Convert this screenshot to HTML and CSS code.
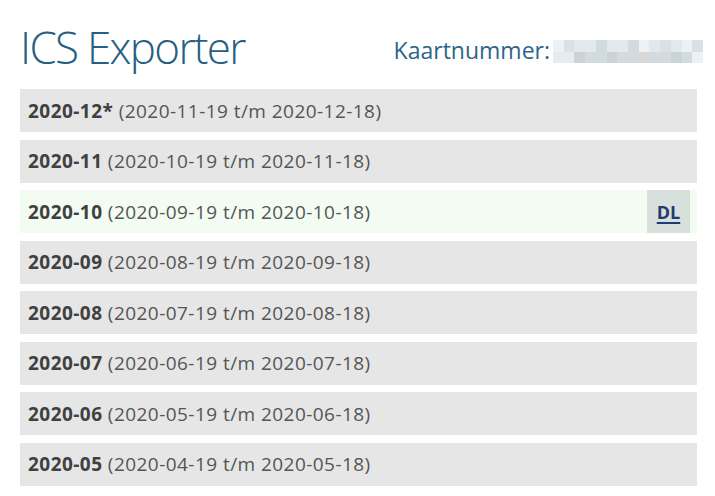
FILE: index.html
```html
<!DOCTYPE html>
<html lang="nl">
<head>
<meta charset="utf-8">
<title>ICS Exporter</title>
<link rel="stylesheet" href="styles.css">
</head>
<body>
<div class="page">
  <header class="header">
    <h1 class="title">ICS Exporter</h1>
    <div class="card">
      <span class="card-label">Kaartnummer:</span>
      <span class="blur" aria-hidden="true">
        <span class="blur-row top"><i></i><i></i><i></i><i></i><i></i><i></i><i></i><i></i><i></i><i></i><i></i><i></i><i></i><i></i></span>
        <span class="blur-row bottom"><i></i><i></i><i></i><i></i><i></i><i></i><i></i><i></i><i></i><i></i><i></i><i></i><i></i><i></i></span>
      </span>
    </div>
  </header>
  <ul class="months">
    <li class="month"><span class="label"><b>2020-12*</b> (2020-11-19 t/m 2020-12-18)</span></li>
    <li class="month"><span class="label"><b>2020-11</b> (2020-10-19 t/m 2020-11-18)</span></li>
    <li class="month active"><span class="label"><b>2020-10</b> (2020-09-19 t/m 2020-10-18)</span><a class="dl" href="#">DL</a></li>
    <li class="month"><span class="label"><b>2020-09</b> (2020-08-19 t/m 2020-09-18)</span></li>
    <li class="month"><span class="label"><b>2020-08</b> (2020-07-19 t/m 2020-08-18)</span></li>
    <li class="month"><span class="label"><b>2020-07</b> (2020-06-19 t/m 2020-07-18)</span></li>
    <li class="month"><span class="label"><b>2020-06</b> (2020-05-19 t/m 2020-06-18)</span></li>
    <li class="month"><span class="label"><b>2020-05</b> (2020-04-19 t/m 2020-05-18)</span></li>
  </ul>
</div>
</body>
</html>
```
FILE: styles.css
```css
* { box-sizing: border-box; }
html, body { margin: 0; padding: 0; background: #ffffff; }
body { font-family: "Open Sans", "Noto Sans", sans-serif; }

.page { padding: 20px 18px 0 20px; }

.header {
  display: flex;
  justify-content: space-between;
  align-items: flex-start;
  height: 69px;
  margin-right: -6px;
}
.title {
  margin: 5px 0 0 0;
  font-weight: 300;
  font-size: 44px;
  line-height: 1;
  color: #265f84;
  letter-spacing: -1.7px;
}
.card {
  display: flex;
  align-items: flex-start;
  gap: 3px;
  margin-top: 19px;
}
.card-label {
  font-size: 23px;
  color: #2e6589;
  line-height: 1;
}
.blur {
  display: flex;
  flex-direction: column;
  width: 150px;
  height: 23px;
  margin-top: 1px;
}
.blur-row { display: flex; flex: 1; }
.blur-row i { flex: 1; background: #e4e8eb; }
.blur-row.top i:nth-child(3n+2) { background: #d9e1e6; }
.blur-row.top i:nth-child(4n+1) { background: #eef1f3; }
.blur-row.top i:nth-child(5) { background: #cfdbe3; }
.blur-row.top i:nth-child(8) { background: #d2dbe1; }
.blur-row.bottom i { background: #d3dbe0; }
.blur-row.bottom i:nth-child(1), .blur-row.bottom i:nth-child(2) { background: #e8ecef; }
.blur-row.bottom i:nth-child(3n) { background: #c9d3da; }
.blur-row.bottom i:nth-child(9) { background: #d8d8d8; }
.blur-row.bottom i:nth-child(14) { background: #eef1f3; }

.months {
  list-style: none;
  margin: 0;
  padding: 0;
  display: flex;
  flex-direction: column;
  gap: 7.5px;
}
.month {
  display: flex;
  align-items: center;
  justify-content: space-between;
  height: 43px;
  padding-left: 8px;
  background: #e6e6e6;
  color: #555555;
  font-size: 19px;
  letter-spacing: 0.45px;
}
.month b { color: #404040; font-weight: 700; }
.month.active { background: #f2fcf2; padding-right: 7px; }
.dl {
  display: flex;
  align-items: center;
  justify-content: center;
  width: 43px;
  height: 43px;
  background: #d7e0da;
  color: #1f3b72;
  font-weight: 700;
  font-size: 18px;
  letter-spacing: 0;
  text-decoration: underline;
  text-underline-offset: 3px;
  text-decoration-thickness: 2px;
}
```
